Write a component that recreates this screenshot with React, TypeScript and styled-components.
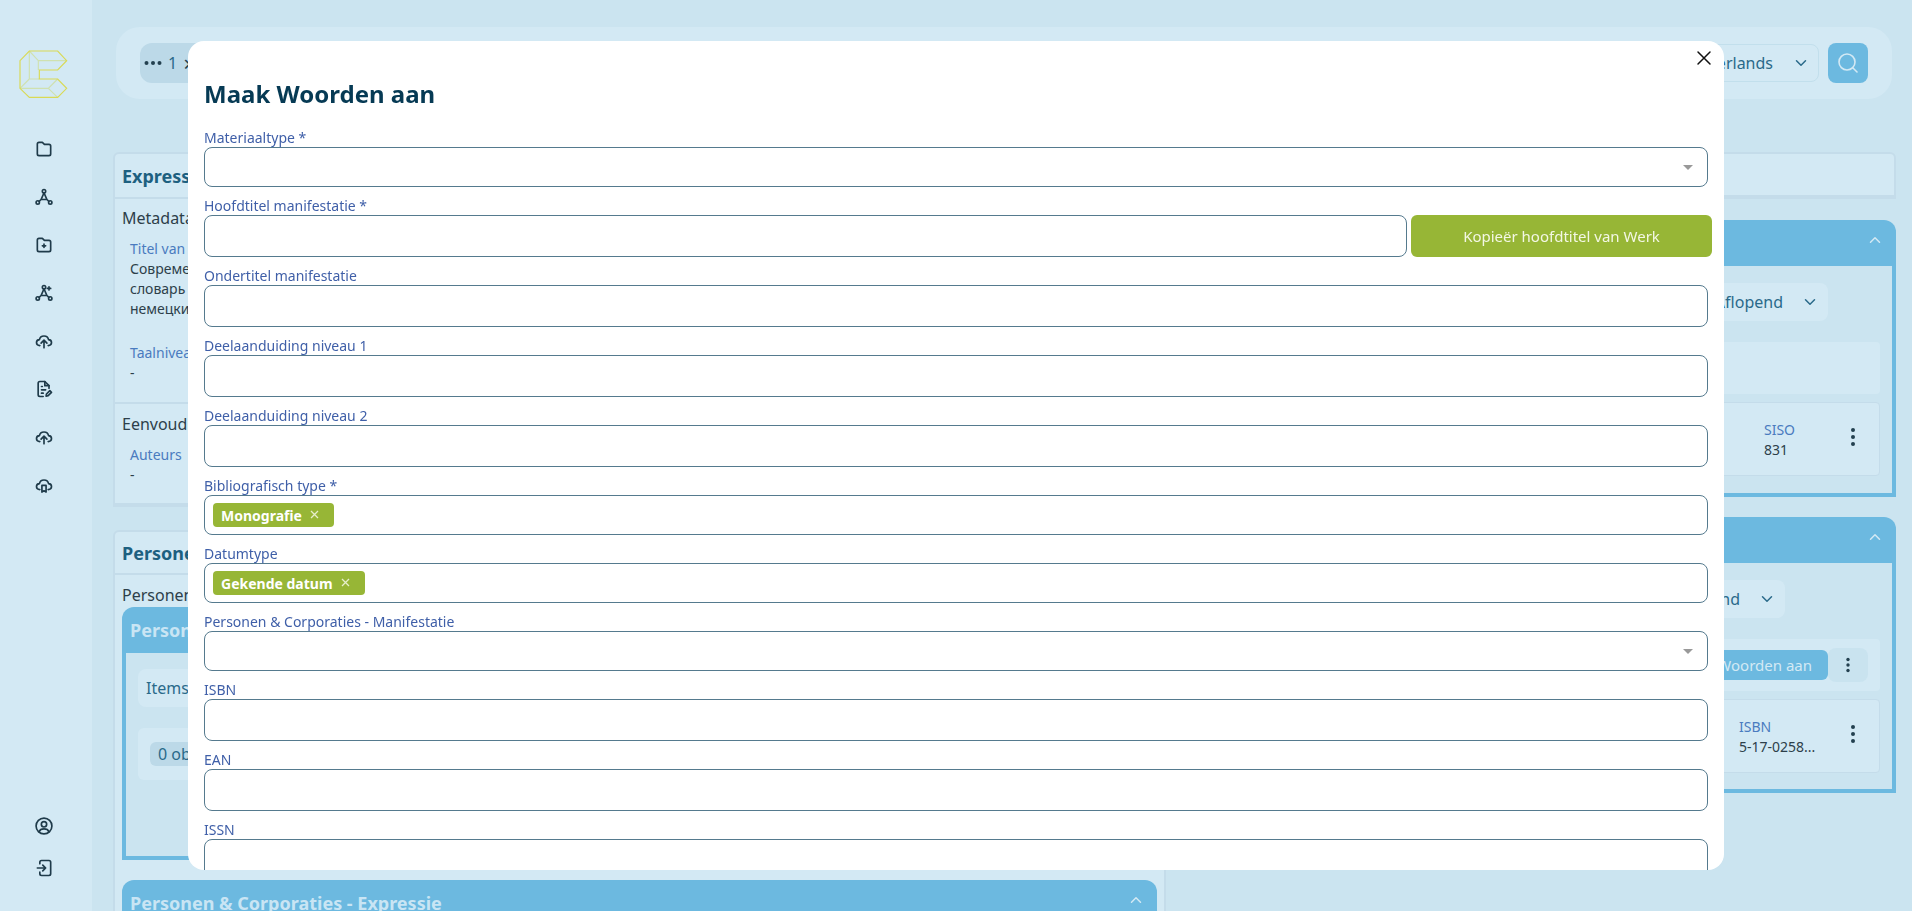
import React from "react";
import styled, { createGlobalStyle } from "styled-components";

const Global = createGlobalStyle`
  html, body { margin: 0; padding: 0; height: 100%; overflow: hidden; }
  body { font-family: "Noto Sans", "Liberation Sans", sans-serif; font-size: 14px; color: #2d3f4a; background: #cbe4f0; }
  * { box-sizing: border-box; }
`;

const Page = styled.div`
  display: flex;
  width: 100%;
  height: 100vh;
  overflow: hidden;
  background: #cbe4f0;
`;

const Sidebar = styled.aside`
  flex: 0 0 92px;
  display: flex;
  flex-direction: column;
  align-items: center;
  background: #d3e9f4;
  color: #1f3b4a;
  padding: 40px 4px 22px 0;
`;

const LogoBox = styled.div`
  width: 70px;
  height: 70px;
  margin: 0 0 15px 1px;
`;

const NavList = styled.nav`
  display: flex;
  flex-direction: column;
  align-items: center;
  flex: 1;
`;

const NavItem = styled.div`
  width: 48px;
  height: 48px;
  display: flex;
  align-items: center;
  justify-content: center;
`;

const NavBottom = styled.div`
  display: flex;
  flex-direction: column;
  align-items: center;
`;

const NavBottomItem = styled.div`
  width: 42px;
  height: 42px;
  display: flex;
  align-items: center;
  justify-content: center;
`;

const Main = styled.main`
  flex: 1;
  min-width: 0;
  padding: 27px 16px 0 21px;
  display: flex;
  flex-direction: column;
`;

const TopBar = styled.header`
  height: 72px;
  margin: 0 4px 0 3px;
  padding: 16px 24px;
  border-radius: 24px;
  background: #d3e9f4;
  display: flex;
  align-items: center;
  justify-content: space-between;
  flex: none;
`;

const Crumbs = styled.div`
  height: 40px;
  display: flex;
  align-items: center;
  gap: 8px;
  padding: 0 12px 0 3px;
  border-radius: 12px;
  background: #bcd9e8;
  font-size: 16px;
  color: #2a6a8a;
`;

const CrumbDots = styled.span`
  display: flex;
  margin-right: -3px;
`;

const CrumbSep = styled.span`
  font-size: 22px;
  line-height: 24px;
  margin-left: -2px;
  color: #23404f;
`;

const TopRight = styled.div`
  display: flex;
  align-items: center;
  gap: 9px;
`;

const LangSelect = styled.div`
  height: 38px;
  display: flex;
  align-items: center;
  gap: 19px;
  padding: 0 8px 0 20px;
  border: 1px solid #c2dfec;
  border-radius: 8px;
  font-size: 16px;
  color: #2a6a8a;
`;

const SearchBtn = styled.button`
  width: 40px;
  height: 40px;
  border: 0;
  padding: 0;
  border-radius: 8px;
  background: #6cb9e0;
  color: #d3e9f4;
  display: flex;
  align-items: center;
  justify-content: center;
`;

const Columns = styled.div`
  margin-top: 53px;
  display: grid;
  grid-template-columns: 1053px 720px;
  column-gap: 10px;
  align-items: start;
`;

const Column = styled.div`
  display: flex;
  flex-direction: column;
`;

const Card = styled.section<{ $gap?: number }>`
  background: #d3e9f4;
  border: 2px solid #c4dcea;
  border-bottom-width: 4px;
  border-radius: 6px 6px 0 0;
  margin-bottom: ${(p) => p.$gap ?? 23}px;
`;

const CardHead = styled.h2<{ $h?: number }>`
  margin: 0;
  height: ${(p) => p.$h ?? 43}px;
  padding: 0 7px;
  display: flex;
  align-items: center;
  font-size: 18px;
  line-height: 24px;
  font-weight: 700;
  color: #1d6080;
`;

const Section = styled.div<{ $pt?: number; $pb?: number }>`
  border-top: 2px solid #c4dcea;
  padding: ${(p) => p.$pt ?? 7}px 7px ${(p) => p.$pb ?? 18}px;
`;

const SectionTitle = styled.div`
  font-size: 16px;
  line-height: 24px;
  color: #2d3f4a;
`;

const Fields = styled.div`
  margin-top: 9px;
  padding-left: 8px;
  display: flex;
  flex-direction: column;
  gap: 24px;
`;

const Key = styled.div`
  font-size: 14px;
  line-height: 20px;
  color: #4a7bbf;
`;

const Value = styled.div`
  font-size: 14px;
  line-height: 20px;
  color: #2d3f4a;
`;

const Panel = styled.section<{ $gap?: number }>`
  margin-bottom: ${(p) => p.$gap ?? 20}px;
`;

const PanelHead = styled.div`
  height: 46px;
  padding: 0 8px;
  border-radius: 12px 12px 0 0;
  background: #6cb9e0;
  color: #c9e5f4;
  display: flex;
  align-items: center;
  justify-content: space-between;
  font-size: 18px;
  font-weight: 700;
`;

const Chevron = styled.span`
  display: flex;
  margin: 0 4px 6px 0;
  color: #d3e9f4;
`;

const PanelBody = styled.div<{ $h: number }>`
  height: ${(p) => p.$h}px;
  border: 4px solid #6cb9e0;
  border-top: 0;
  background: #cbe4f0;
  padding: 16px 12px 0;
  display: flex;
  flex-direction: column;
`;

const Bar = styled.div`
  height: 38px;
  display: flex;
  align-items: center;
  padding: 0 8px;
  border-radius: 8px;
  background: #d3e9f4;
  font-size: 16px;
  color: #2a6a8a;
`;

const ListBox = styled.div`
  margin-top: 21px;
  height: 52px;
  padding: 14px 12px;
  border-radius: 6px;
  background: #d3e9f4;
`;

const CountChip = styled.span`
  display: inline-flex;
  align-items: center;
  height: 24px;
  padding: 0 8px;
  border-radius: 6px;
  background: #bcd9e8;
  font-size: 16px;
  color: #2a6a8a;
`;

const SortRow = styled.div<{ $right: number }>`
  display: flex;
  justify-content: flex-end;
  margin-top: 1px;
  padding-right: ${(p) => p.$right}px;
`;

const SortSelect = styled.div`
  height: 38px;
  display: flex;
  align-items: center;
  gap: 18px;
  padding: 0 9px 0 12px;
  border-radius: 8px;
  background: #d3e9f4;
  font-size: 16px;
  color: #2a6a8a;
`;

const ActionBar = styled.div`
  margin-top: 21px;
  height: 52px;
  padding: 9px 12px;
  border-radius: 4px;
  background: #d3e9f4;
  display: flex;
  align-items: center;
  justify-content: flex-end;
`;

const ActionBtn = styled.button`
  height: 30px;
  border: 0;
  padding: 0 16px;
  border-radius: 6px;
  background: #6cb9e0;
  color: #d3e9f4;
  font: 15px "Noto Sans", sans-serif;
`;

const KebabBtn = styled.button`
  width: 40px;
  height: 34px;
  border: 0;
  padding: 0;
  border-radius: 8px;
  background: #c9e3ef;
  color: #23404f;
  display: flex;
  align-items: center;
  justify-content: center;
`;

const ItemCard = styled.div<{ $top: number; $h: number }>`
  margin-top: ${(p) => p.$top}px;
  height: ${(p) => p.$h}px;
  border: 1px solid #c4dcea;
  border-radius: 4px;
  background: #d3e9f4;
  display: flex;
  align-items: center;
  justify-content: flex-end;
  padding-right: 23px;
  gap: 18px;
`;

const ItemField = styled.div<{ $w: number }>`
  width: ${(p) => p.$w}px;
  margin-top: 2px;
`;

const Dots = styled.span`
  display: flex;
  color: #23404f;
  margin-top: -5px;
`;

const Overlay = styled.div`
  position: fixed;
  inset: 0;
  display: flex;
  align-items: center;
  justify-content: center;
`;

const Modal = styled.div`
  position: relative;
  width: 1536px;
  height: calc(100% - 82px);
  background: #fff;
  border-radius: 16px;
  overflow: hidden;
  padding: 37px 16px 0;
`;

const CloseBtn = styled.button`
  position: absolute;
  top: 9px;
  right: 12px;
  width: 16px;
  height: 16px;
  border: 0;
  padding: 0;
  background: none;
  color: #111;
  display: flex;
`;

const Title = styled.h1`
  margin: 0 0 19px;
  font-size: 24px;
  line-height: 32px;
  font-weight: 700;
  color: #063a54;
`;

const Form = styled.form`
  display: flex;
  flex-direction: column;
  gap: 10px;
`;

const Field = styled.div`
  display: flex;
  flex-direction: column;
  flex: none;
`;

const Label = styled.label`
  font-size: 14px;
  line-height: 18px;
  color: #3f5fa8;
`;

const Row = styled.div`
  display: flex;
  gap: 4px;
  margin-right: -4px;
`;

const Input = styled.input`
  flex: none;
  display: block;
  width: 100%;
  height: 42px;
  border: 1px solid #557a8e;
  border-radius: 8px;
  background: #fff;
  padding: 0 8px;
  font: 14px "Noto Sans", sans-serif;
  outline: none;
`;

const RowInput = styled(Input)`
  flex: 1;
  width: auto;
  min-width: 0;
`;

const SelectBox = styled.div`
  position: relative;
  height: 40px;
  flex: none;
  border: 1px solid #557a8e;
  border-radius: 8px;
  background: #fff;
  display: flex;
  align-items: center;
  padding: 0 8px;
  gap: 4px;
`;

const Caret = styled.span`
  position: absolute;
  right: 14px;
  top: 17px;
  width: 0;
  height: 0;
  border-left: 5px solid transparent;
  border-right: 5px solid transparent;
  border-top: 5px solid #999;
`;

const Tag = styled.span`
  height: 24px;
  display: inline-flex;
  align-items: center;
  gap: 8px;
  padding: 0 15px 0 8px;
  border-radius: 4px;
  background: #97b636;
  color: #fff;
  font-size: 14px;
  font-weight: 700;
`;

const TagX = styled.span`
  display: flex;
  color: #e6eecb;
  margin-top: -1px;
`;

const CopyBtn = styled.button`
  flex: 0 0 301px;
  height: 42px;
  border: 0;
  border-radius: 6px;
  background: #97b636;
  color: #f3f7e4;
  font: 15px "Noto Sans", sans-serif;
`;

type IP = { size?: number; sw?: number; children: React.ReactNode };
const Ico = ({ size = 20, sw = 2, children }: IP) => (
  <svg width={size} height={size} viewBox="0 0 24 24" fill="none" stroke="currentColor" strokeWidth={sw} strokeLinecap="round" strokeLinejoin="round">
    {children}
  </svg>
);

const Logo = () => (
  <svg width="70" height="70" viewBox="0 0 210 210" fill="none">
    <g stroke="#cfe1b0" strokeWidth="3.5">
      <path d="M58 33V117L30 145M58 117H88M58 33L85 62V90M85 62H168M30 145H115L143 117M115 145L143 172" />
    </g>
    <path d="M58 33H143L170 62L143 90H88V117H143L170 145L143 172H58L30 145V62Z" stroke="#d9da55" strokeWidth="3.5" />
  </svg>
);

const Graph = ({ plus }: { plus?: boolean }) => (
  <Ico>
    <circle cx="12" cy="5" r="2" />
    <circle cx="4.5" cy="18.5" r="2" />
    <circle cx="19.5" cy="18.5" r="2" />
    <path d="M12 7L8.5 15H15.5L12 7M8.5 15L6.2 17.2M15.5 15L17.8 17.2" />
    {plus && <path d="M18 4.5V8.5M16 6.5H20" />}
  </Ico>
);

const CloudUp = () => (
  <Ico>
    <path d="M7 17.5C4.8 17.5 3 15.9 3 13.9C3 12 4.5 10.6 6.5 10.4C7 7.8 9.2 6 12 6C14.8 6 17 7.8 17.5 10.4C19.5 10.6 21 12 21 13.9C21 15.9 19.2 17.5 17 17.5" />
    <path d="M12 20V12M8.5 14.5L12 11L15.5 14.5" />
  </Ico>
);

const navIcons = [
  <Ico key="a"><path d="M4 6C4 5 5 4 6 4H10L12.5 6.5H18C19 6.5 20 7.5 20 8.5V18C20 19 19 20 18 20H6C5 20 4 19 4 18Z" /></Ico>,
  <Graph key="b" />,
  <Ico key="c"><path d="M4 6C4 5 5 4 6 4H10L12.5 6.5H18C19 6.5 20 7.5 20 8.5V18C20 19 19 20 18 20H6C5 20 4 19 4 18Z" /><path d="M12 11V15M10 13H14" /></Ico>,
  <Graph key="d" plus />,
  <CloudUp key="e" />,
  <Ico key="f"><path d="M11 21H7C6 21 5 20 5 19V5C5 4 6 3 7 3H13L18 8V11" /><path d="M13 3V8H18M9 9H10M9 13H14M9 17H11" /><path d="M14.5 20.5L15 18L19 14L21 16L17 20Z" /></Ico>,
  <CloudUp key="g" />,
  <Ico key="h"><path d="M7 17.5C4.8 17.5 3 15.9 3 13.9C3 12 4.5 10.6 6.5 10.4C7 7.8 9.2 6 12 6C14.8 6 17 7.8 17.5 10.4C19.5 10.6 21 12 21 13.9C21 15.9 19.2 17.5 17 17.5" /><path d="M9.5 12.5H14.5V20.5L12 19L9.5 20.5Z" /></Ico>,
];

const ChevronDown = () => (
  <Ico size={18}><path d="M6 9L12 15L18 9" /></Ico>
);
const ChevronUp = () => (
  <Ico size={18}><path d="M6 15L12 9L18 15" /></Ico>
);
const Kebab = () => (
  <svg width="6" height="20" viewBox="0 0 6 20" fill="currentColor">
    <circle cx="3" cy="3" r="2" /><circle cx="3" cy="10" r="2" /><circle cx="3" cy="17" r="2" />
  </svg>
);
const Small = () => (
  <svg width="6" height="16" viewBox="0 0 6 16" fill="currentColor">
    <circle cx="3" cy="2.5" r="1.7" /><circle cx="3" cy="8" r="1.7" /><circle cx="3" cy="13.5" r="1.7" />
  </svg>
);
const XSmall = () => (
  <svg width="9" height="9" viewBox="0 0 9 9" stroke="currentColor" strokeWidth="1.3" fill="none"><path d="M1 1L8 8M8 1L1 8" /></svg>
);

const TextField = ({ label }: { label: string }) => (
  <Field>
    <Label>{label}</Label>
    <Input />
  </Field>
);
const ComboField = ({ label }: { label: string }) => (
  <Field>
    <Label>{label}</Label>
    <SelectBox><Caret /></SelectBox>
  </Field>
);
const TagField = ({ label, tag }: { label: string; tag: string }) => (
  <Field>
    <Label>{label}</Label>
    <SelectBox>
      <Tag>{tag}<TagX><XSmall /></TagX></Tag>
    </SelectBox>
  </Field>
);

export default function App() {
  return (
    <Page>
      <Global />
      <Sidebar>
        <LogoBox><Logo /></LogoBox>
        <NavList>
          {navIcons.map((ic, i) => <NavItem key={i}>{ic}</NavItem>)}
        </NavList>
        <NavBottom>
          <NavBottomItem>
            <Ico><circle cx="12" cy="12" r="9.5" /><circle cx="12" cy="10" r="3.2" /><path d="M6 19C7 16.5 9.2 15.5 12 15.5C14.8 15.5 17 16.5 18 19" /></Ico>
          </NavBottomItem>
          <NavBottomItem>
            <Ico><path d="M7 7V5C7 4 8 3 9 3H18C19 3 20 4 20 5V19C20 20 19 21 18 21H9C8 21 7 20 7 19V17" /><path d="M4 12H14M10.5 8.5L14 12L10.5 15.5" /></Ico>
          </NavBottomItem>
        </NavBottom>
      </Sidebar>

      <Main>
        <TopBar>
          <Crumbs>
            <CrumbDots>
              <svg width="20" height="6" viewBox="0 0 20 6" fill="#23404f"><circle cx="3.5" cy="3" r="2" /><circle cx="10" cy="3" r="2" /><circle cx="16.5" cy="3" r="2" /></svg>
            </CrumbDots>
            <span>1</span>
            <CrumbSep>×</CrumbSep>
          </Crumbs>
          <TopRight>
            <LangSelect>
              <span>Nederlands</span>
              <ChevronDown />
            </LangSelect>
            <SearchBtn>
              <Ico size={24} sw={1.6}><circle cx="11" cy="11" r="8" /><path d="M17 17L21 21" /></Ico>
            </SearchBtn>
          </TopRight>
        </TopBar>

        <Columns>
          <Column>
            <Card>
              <CardHead>Expressie</CardHead>
              <Section $pb={19}>
                <SectionTitle>Metadata</SectionTitle>
                <Fields>
                  <div>
                    <Key>Titel van Expressie</Key>
                    <Value>Современный<br />словарь<br />немецкий</Value>
                  </div>
                  <div>
                    <Key>Taalniveau</Key>
                    <Value>-</Value>
                  </div>
                </Fields>
              </Section>
              <Section $pt={8}>
                <SectionTitle>Eenvoudige</SectionTitle>
                <Fields>
                  <div>
                    <Key>Auteurs</Key>
                    <Value>-</Value>
                  </div>
                </Fields>
              </Section>
            </Card>
            <Card>
              <CardHead $h={41}>Personen</CardHead>
              <Section $pt={8} $pb={0}>
                <SectionTitle>Personen</SectionTitle>
                <Panel>
                  <PanelHead>Personen<Chevron><ChevronUp /></Chevron></PanelHead>
                  <PanelBody $h={207}>
                    <Bar>Items</Bar>
                    <ListBox><CountChip>0 objecten</CountChip></ListBox>
                  </PanelBody>
                </Panel>
                <Panel>
                  <PanelHead>Personen &amp; Corporaties - Expressie<Chevron><ChevronUp /></Chevron></PanelHead>
                </Panel>
              </Section>
            </Card>
          </Column>

          <Column>
            <Card $gap={21}>
              <CardHead $h={41} />
            </Card>
            <Panel>
              <PanelHead>Werken<Chevron><ChevronUp /></Chevron></PanelHead>
              <PanelBody $h={231}>
                <SortRow $right={52}>
                  <SortSelect><span>Aflopend</span><ChevronDown /></SortSelect>
                </SortRow>
                <ActionBar />
                <ItemCard $top={8} $h={74}>
                  <ItemField $w={68}><Key>SISO</Key><Value>831</Value></ItemField>
                  <Dots><Kebab /></Dots>
                </ItemCard>
              </PanelBody>
            </Panel>
            <Panel>
              <PanelHead>Manifestaties<Chevron><ChevronUp /></Chevron></PanelHead>
              <PanelBody $h={230}>
                <SortRow $right={95}>
                  <SortSelect><span>Oplopend</span><ChevronDown /></SortSelect>
                </SortRow>
                <ActionBar>
                  <ActionBtn>Maak Woorden aan</ActionBtn>
                  <KebabBtn><Small /></KebabBtn>
                </ActionBar>
                <ItemCard $top={8} $h={74}>
                  <ItemField $w={93}><Key>ISBN</Key><Value>5-17-0258...</Value></ItemField>
                  <Dots><Kebab /></Dots>
                </ItemCard>
              </PanelBody>
            </Panel>
          </Column>
        </Columns>
      </Main>

      <Overlay>
        <Modal>
          <CloseBtn aria-label="Sluiten">
            <svg width="16" height="16" viewBox="0 0 16 16" fill="none" stroke="currentColor" strokeWidth="1.5" strokeLinecap="round"><path d="M2 2L14 14M14 2L2 14" /></svg>
          </CloseBtn>
          <Title>Maak Woorden aan</Title>
          <Form>
            <ComboField label="Materiaaltype *" />
            <Field>
              <Label>Hoofdtitel manifestatie *</Label>
              <Row>
                <RowInput />
                <CopyBtn type="button">Kopieër hoofdtitel van Werk</CopyBtn>
              </Row>
            </Field>
            <TextField label="Ondertitel manifestatie" />
            <TextField label="Deelaanduiding niveau 1" />
            <TextField label="Deelaanduiding niveau 2" />
            <TagField label="Bibliografisch type *" tag="Monografie" />
            <TagField label="Datumtype" tag="Gekende datum" />
            <ComboField label="Personen & Corporaties - Manifestatie" />
            <TextField label="ISBN" />
            <TextField label="EAN" />
            <TextField label="ISSN" />
          </Form>
        </Modal>
      </Overlay>
    </Page>
  );
}
